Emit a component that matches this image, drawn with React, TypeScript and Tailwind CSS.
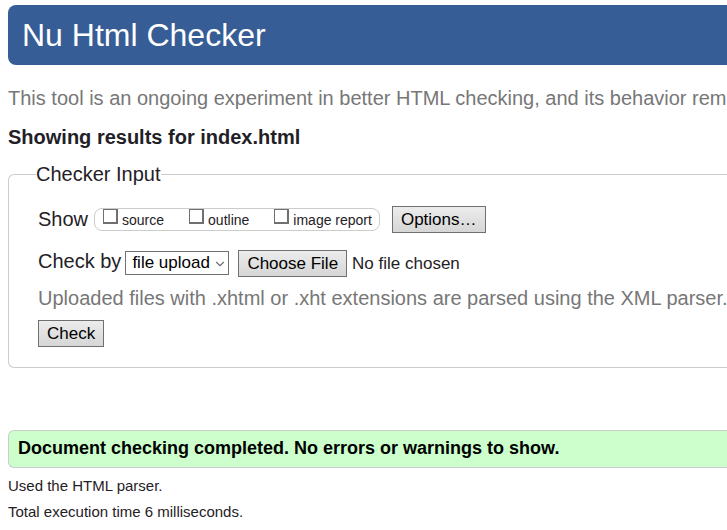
import { ChevronDown } from "lucide-react";

const buttonClass =
  "border border-[#707070] bg-linear-to-b from-[#ececec] to-[#d6d6d6] px-2 text-[17px] leading-[25px] text-black";

function ShowOption({ id, label }: { id: string; label: string }) {
  return (
    <span className="flex">
      <input
        id={id}
        type="checkbox"
        className="size-[15px] shrink-0 appearance-none border border-r-2 border-b-2 border-[#707070] bg-white checked:bg-[#707070]"
      />
      <label htmlFor={id} className="ml-1 text-sm leading-[22px]">
        {label}
      </label>
    </span>
  );
}

export default function App() {
  return (
    <div className="overflow-hidden bg-white pt-[5px] pl-2 font-['Liberation_Sans',Arial,sans-serif] text-xl leading-[30px] whitespace-nowrap text-[#1f2126]">
      <h1 className="rounded-l-lg bg-[#365d95] px-3.5 text-[32px] leading-[60px] text-white">
        Nu Html Checker
      </h1>
      <p className="mt-[18px] text-[#777777]">
        This tool is an ongoing experiment in better HTML checking, and its behavior rem
      </p>
      <h2 className="mt-[9px] font-bold">Showing results for index.html</h2>

      <form onSubmit={(event) => event.preventDefault()}>
        <fieldset className="mt-[7px] rounded-l-md border border-r-0 border-[#cccccc] pb-5 pl-[29px]">
          <legend className="-ml-0.5">Checker Input</legend>
          <div className="mt-[17px] flex h-[27px] items-center">
            <span id="show-label" className="pb-0.5">
              Show
            </span>
            <div
              role="group"
              aria-labelledby="show-label"
              className="ml-1.5 flex h-[23px] gap-[25px] rounded-lg border border-[#cccccc] pr-[7px] pl-2"
            >
              <ShowOption id="show-source" label="source" />
              <ShowOption id="show-outline" label="outline" />
              <ShowOption id="show-image-report" label="image report" />
            </div>
            <button type="button" className={`ml-3 ${buttonClass}`}>
              Options…
            </button>
          </div>

          <div className="mt-4 flex h-7 items-center">
            <label htmlFor="check-by" className="pb-1">
              Check by
            </label>
            <div className="relative ml-1">
              <select
                id="check-by"
                className="block h-6 w-[104px] appearance-none border border-[#707070] bg-white px-1.5 text-[17px] leading-[22px] text-black"
              >
                <option>file upload</option>
              </select>
              <ChevronDown
                aria-hidden="true"
                className="pointer-events-none absolute top-1.5 right-0.5 size-3.5 text-[#707070]"
              />
            </div>
            <input
              type="file"
              aria-label="File to check"
              className="ml-[9px] h-[27px] w-[240px] text-[17px] leading-[27px] text-[#1f2126] file:mr-[5px] file:h-[27px] file:border file:border-solid file:border-[#707070] file:bg-linear-to-b file:from-[#ececec] file:to-[#d6d6d6] file:px-2 file:leading-[25px] file:text-black"
            />
          </div>

          <p className="mt-1.5 text-[#777777]">
            Uploaded files with .xhtml or .xht extensions are parsed using the XML parser.
          </p>
          <div className="mt-[7px] flex">
            <button type="submit" className={buttonClass}>
              Check
            </button>
          </div>
        </fieldset>
      </form>

      <p className="mt-[62px] rounded-l-md border border-r-0 border-[#cccccc] bg-[#ccffcc] px-[9px] pb-0.5 text-lg leading-[34px] font-bold text-black">
        Document checking completed. No errors or warnings to show.
      </p>
      <p className="mt-[5px] text-[15px] leading-[26px]">Used the HTML parser.</p>
      <p className="text-[15px] leading-[26px]">Total execution time 6 milliseconds.</p>
    </div>
  );
}
